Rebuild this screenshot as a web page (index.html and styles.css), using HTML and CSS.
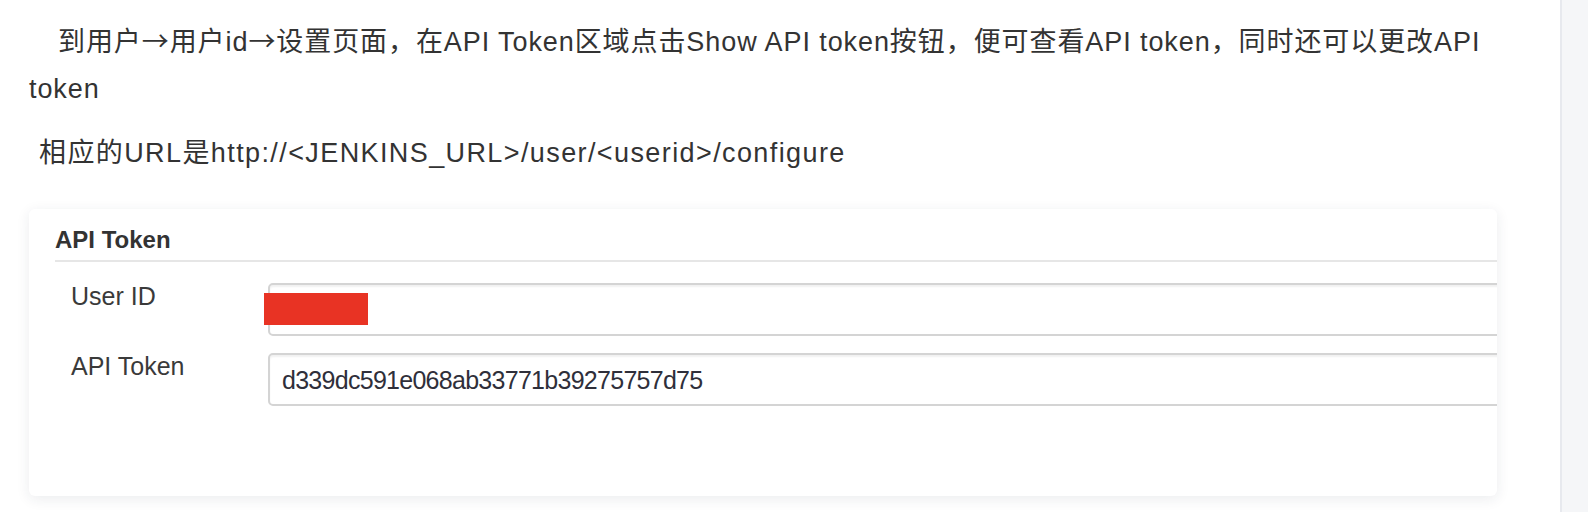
FILE: index.html
```html
<!DOCTYPE html>
<html lang="zh-CN">
<head>
<meta charset="utf-8">
<title>API Token</title>
<link rel="stylesheet" href="styles.css">
</head>
<body>
<div class="page">
  <main class="main">
    <p class="para para-first">到用户<span class="arrow">→</span>用户id<span class="arrow">→</span>设置页面，在API Token区域点击Show API token按钮，便可查看API token，同时还可以更改API token</p>
    <p class="para para-second">相应的URL是http://&lt;JENKINS_URL&gt;/user/&lt;userid&gt;/configure</p>
    <section class="card">
      <h2 class="card-title">API Token</h2>
      <div class="form">
        <div class="row">
          <div class="label">User ID</div>
          <div class="field">
            <div class="input"></div>
            <span class="redact"></span>
          </div>
        </div>
        <div class="row">
          <div class="label">API Token</div>
          <div class="field">
            <div class="input">d339dc591e068ab33771b39275757d75</div>
          </div>
        </div>
      </div>
    </section>
  </main>
  <aside class="aside"></aside>
</div>
</body>
</html>
```
FILE: styles.css
```css
html, body {
  margin: 0;
  padding: 0;
  background: #ffffff;
}

.page {
  display: flex;
  min-height: 512px;
  font-family: "Liberation Sans", "Noto Sans CJK SC", sans-serif;
  color: #333333;
}

.main {
  width: 1560px;
  flex: 0 0 1560px;
  box-sizing: border-box;
  padding: 19px 31px 0 29px;
}

.aside {
  flex: 1;
  background: #f5f6f8;
  border-left: 2px solid #e7e9ee;
}

.para {
  margin: 0;
  font-family: "Liberation Sans", "Noto Sans CJK SC", sans-serif;
  font-size: 27px;
  line-height: 47px;
  color: #333333;
}

.arrow {
  font-family: "Noto Sans CJK SC", sans-serif;
  line-height: 1;
}

.para-first {
  text-indent: 29px;
  letter-spacing: 0.92px;
}

.para-second {
  margin-top: 17px;
  text-indent: 10px;
  letter-spacing: 1.4px;
}

.card {
  margin-top: 32px;
  width: 1468px;
  height: 287px;
  box-sizing: border-box;
  background: #ffffff;
  border-radius: 6px;
  box-shadow: 0 3px 14px rgba(30, 40, 70, 0.09);
  overflow: hidden;
  padding-top: 17px;
}

.card-title {
  margin: 0 0 0 26px;
  padding-bottom: 6px;
  font-size: 24px;
  line-height: 28px;
  font-weight: bold;
  color: #333333;
  border-bottom: 2px solid #e6e6e6;
}

.form {
  display: flex;
  flex-direction: column;
  gap: 17px;
  padding: 21px 0 0 42px;
}

.row {
  display: grid;
  grid-template-columns: 197px 1fr;
  align-items: start;
}

.label {
  font-size: 25px;
  line-height: 26px;
  color: #3a3a3a;
}

.field {
  position: relative;
}

.input {
  box-sizing: border-box;
  width: calc(100% + 12px);
  height: 53px;
  border: 2px solid #d4d4d4;
  border-radius: 5px;
  box-shadow: inset 0 2px 2px rgba(0, 0, 0, 0.06);
  padding: 10px 12px;
  font-size: 25px;
  line-height: 30px;
  letter-spacing: -0.72px;
  color: #2f2f3a;
  white-space: nowrap;
}

.redact {
  position: absolute;
  left: -4px;
  top: 10px;
  width: 104px;
  height: 32px;
  background: #e83324;
}
```
